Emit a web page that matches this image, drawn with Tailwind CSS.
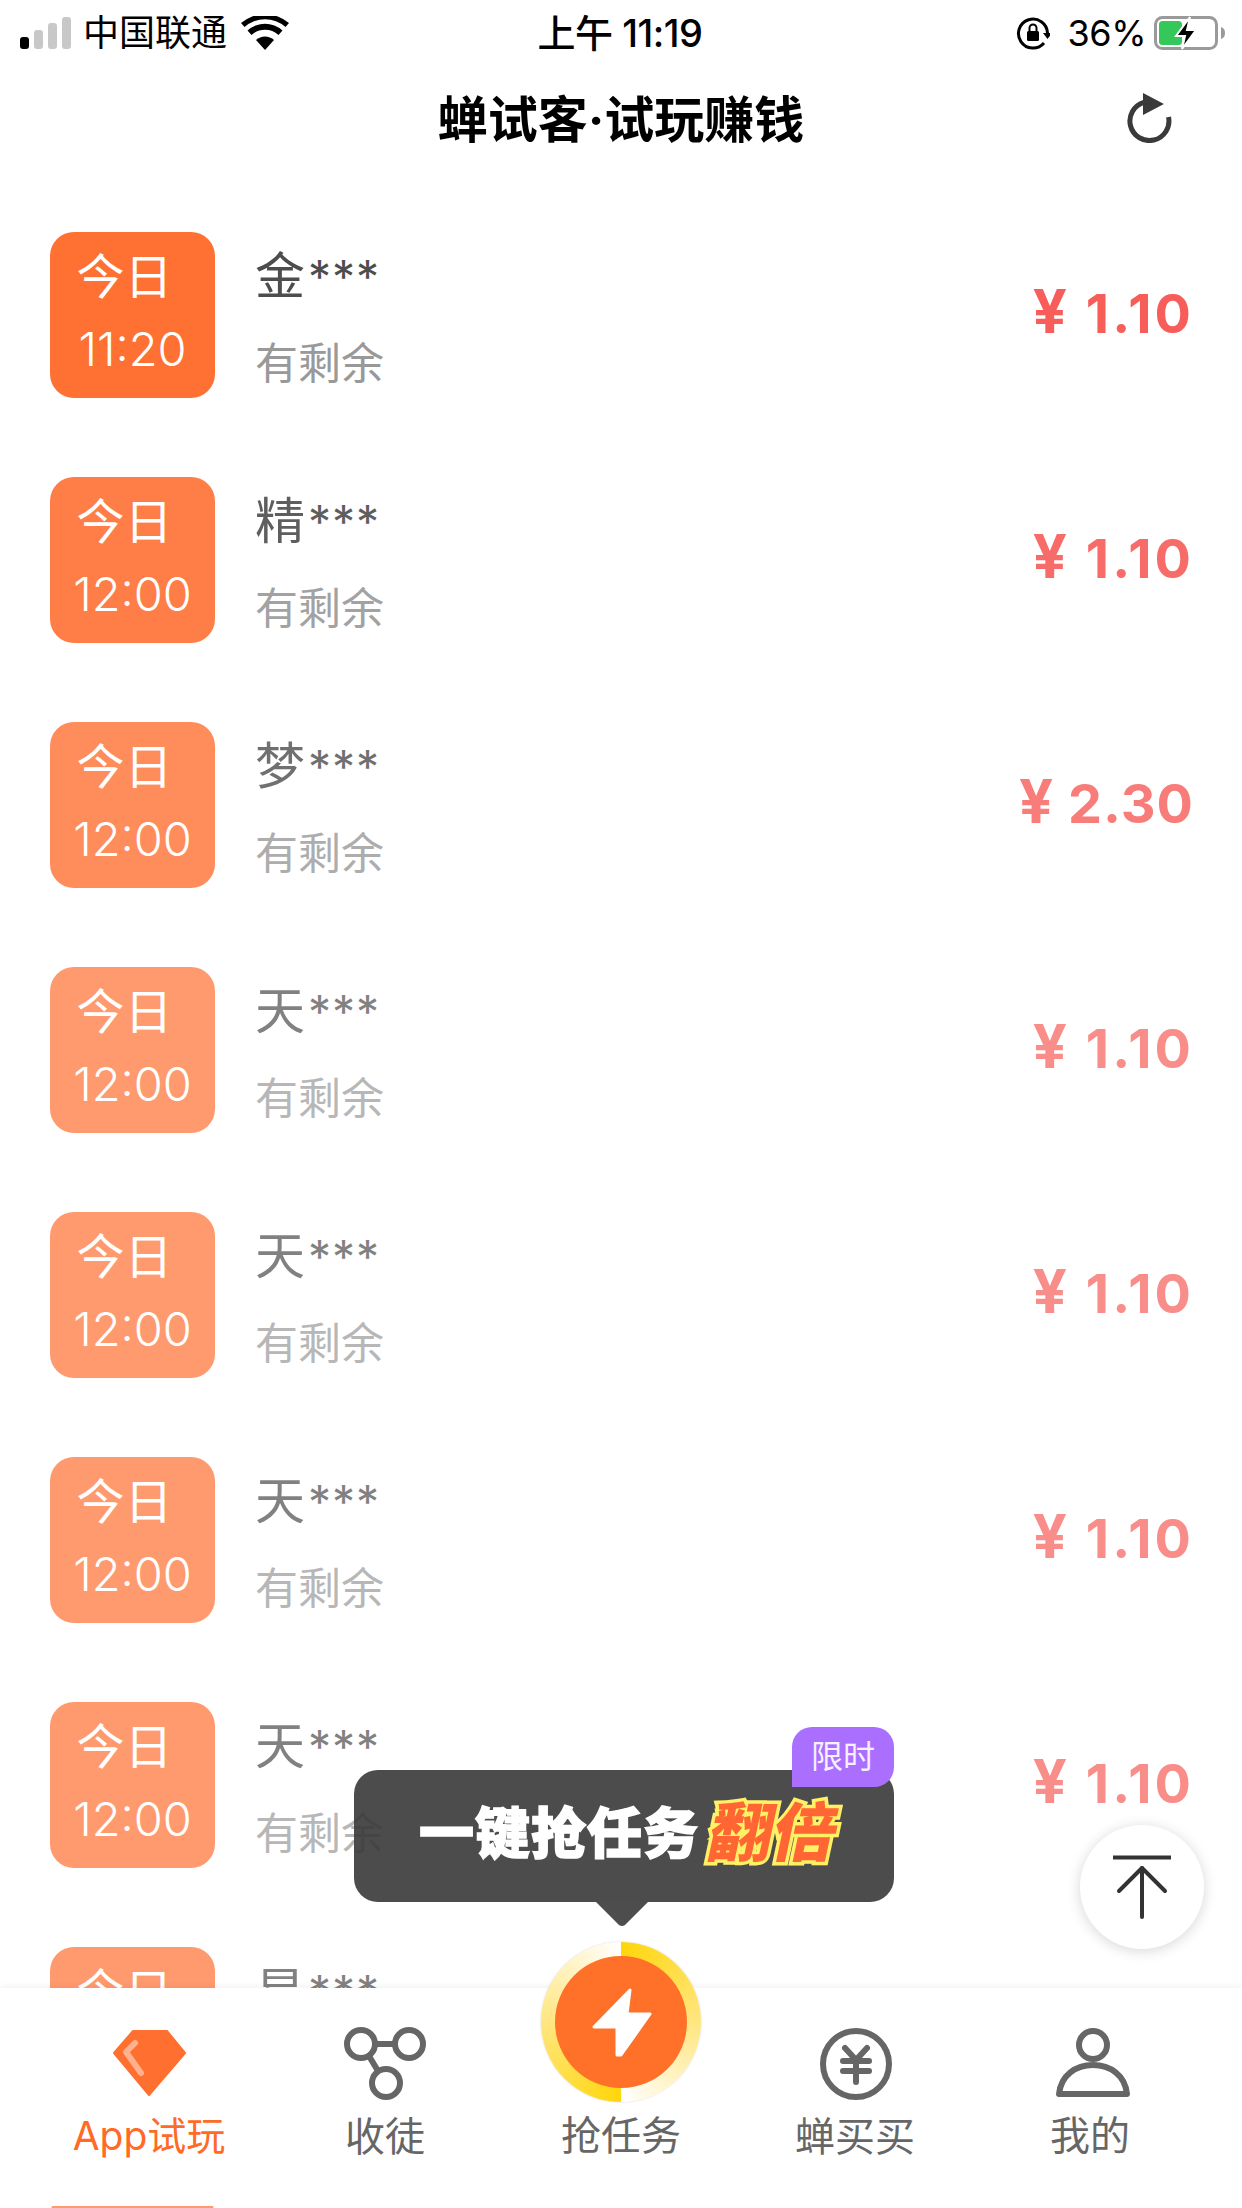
<!DOCTYPE html>
<html lang="zh-CN">
<head>
    <meta charset="UTF-8">
    <meta name="viewport" content="width=device-width, initial-scale=1.0">
    <title>蝉试客·试玩赚钱</title>
    <script src="https://cdn.jsdelivr.net/npm/@tailwindcss/browser@4"></script>
</head>
<body class="bg-white font-['Inter','Noto_Sans_CJK_SC',sans-serif]">
<div class="relative w-[1242px] h-[2208px] overflow-hidden bg-white">

    <!-- Status bar -->
    <div class="grid grid-cols-3 items-center h-[66px] pl-[20px] pr-[16px] text-black">
        <div class="flex items-center">
            <div class="flex items-end gap-[5px] h-[32px]">
                <div class="w-[9px] h-[12px] rounded-[3px] bg-black"></div>
                <div class="w-[9px] h-[19px] rounded-[3px] bg-[#c8c8c8]"></div>
                <div class="w-[9px] h-[26px] rounded-[3px] bg-[#c8c8c8]"></div>
                <div class="w-[9px] h-[32px] rounded-[3px] bg-[#c8c8c8]"></div>
            </div>
            <span class="ml-[12px] text-[36px] leading-none whitespace-nowrap">中国联通</span>
            <svg class="ml-[14px]" width="48" height="34" viewBox="0 0 48 34">
                <path d="M24 34 L15 24 A13 13 0 0 1 33 24 Z" fill="#000"/>
                <path d="M10.500 19 A20 20 0 0 1 37.500 19 L41.500 14.500 A26 26 0 0 0 6.500 14.500 Z" fill="#000"/>
                <path d="M3.500 11 A31 31 0 0 1 44.500 11 L48 7 A37 37 0 0 0 0 7 Z" fill="#000"/>
            </svg>
        </div>
        <div class="pr-[6px] text-center text-[38px] leading-none font-medium tracking-[-0.5px] whitespace-nowrap">上午 11:19</div>
        <div class="flex items-center justify-end">
            <svg width="34" height="34" viewBox="0 0 34 34" fill="none">
                <path d="M28 27 A14.500 14.500 0 1 1 31.500 17" stroke="#000" stroke-width="3"/>
                <path d="M27 17 L36 17 L31.500 23 Z" fill="#000"/>
                <rect x="11" y="15" width="12" height="10" rx="1.500" fill="#000"/>
                <path d="M13.500 15 V12 A3.500 3.500 0 0 1 20.500 12 V15" stroke="#000" stroke-width="2"/>
            </svg>
            <span class="ml-[18px] text-[36px] leading-none tracking-[-0.5px]">36%</span>
            <svg class="ml-[8px]" width="72" height="34" viewBox="0 0 72 34" fill="none">
                <rect x="1.500" y="1.500" width="61" height="31" rx="7" stroke="#9a9a9a" stroke-width="3"/>
                <path d="M67 11 C70 12 71 14 71 17 C71 20 70 22 67 23 Z" fill="#9a9a9a"/>
                <rect x="5" y="5" width="23" height="24" rx="3.500" fill="#34c759"/>
                <path d="M36 1 L22 20 L31 20 L28 33 L42 14 L33 14 Z" fill="#000" stroke="#fff" stroke-width="2"/>
            </svg>
        </div>
    </div>

    <!-- Nav bar -->
    <div class="relative flex items-center justify-center h-[108px]">
        <h1 class="text-[50px] leading-none font-bold text-black whitespace-nowrap">蝉试客·试玩赚钱</h1>
        <svg class="absolute left-[1126px] top-[25px]" width="46" height="52" viewBox="0 0 46 52" fill="none">
            <path d="M18 11.300 A19.500 19.500 0 1 0 42.500 26" stroke="#3a3a3a" stroke-width="5"/>
            <path d="M17 2 L38 13 L17 24 Z" fill="#3a3a3a"/>
        </svg>
    </div>

    <!-- Task list -->
    <div id="list" class="pt-[58px] pl-[50px] pr-[50px]"></div>

    <!-- Back to top -->
    <div class="absolute left-[1080px] top-[1825px] flex items-center justify-center w-[124px] h-[124px] rounded-full bg-white shadow-[0_2px_14px_rgba(0,0,0,0.16)]">
        <svg width="64" height="64" viewBox="0 0 64 64" fill="none" stroke="#333" stroke-width="4" stroke-linecap="round" stroke-linejoin="round">
            <path d="M3 2.500 H61" stroke-linecap="butt"/>
            <path d="M32 13 V62"/>
            <path d="M9 36 L32 13 L55 36"/>
        </svg>
    </div>

    <!-- Tooltip over the task button -->
    <div class="absolute left-[354px] top-[1770px] w-[540px] h-[132px] rounded-[24px] bg-[#393939]/90">
        <div class="absolute right-0 -top-[43px] flex items-center justify-center w-[102px] h-[60px] rounded-t-[20px] rounded-br-[20px] bg-[#aa6fff] text-[32px] leading-none text-white/90">限时</div>
        <div class="flex items-center h-full pl-[65px] pb-[6px]">
            <span class="text-[55px] leading-none font-black text-white tracking-[1px] whitespace-nowrap [-webkit-text-stroke:1.5px_#fff]">一键抢任务</span>
            <span class="ml-[11px] -skew-x-12 text-[64px] leading-none font-black text-[#ff6633] whitespace-nowrap [-webkit-text-stroke:7px_#fff066] [paint-order:stroke_fill]">翻倍</span>
        </div>
        <svg class="absolute left-[242px] top-full" width="52" height="25" viewBox="0 0 52 25">
            <path d="M0 0 H52 L29 23 Q26 25 23 23 Z" fill="#4d4d4d"/>
        </svg>
    </div>

    <!-- Tab bar -->
    <div class="absolute left-0 right-0 top-[1988px] h-[218px] grid grid-cols-5 px-[31px] bg-white shadow-[0_-2px_6px_rgba(0,0,0,0.05)]">
        <div class="flex flex-col items-center pt-[40px]">
            <svg width="74" height="68" viewBox="0 0 74 68">
                <path d="M21 3 H55 L73 25 L37 67 L2 25 Z" fill="#ff7030" stroke="#ff7030" stroke-width="2" stroke-linejoin="round"/>
                <path d="M23 15 L14 24 L29 45" fill="none" stroke="#ffb08e" stroke-width="6" stroke-linecap="round" stroke-linejoin="round"/>
            </svg>
            <span class="mt-[20px] text-[39px] leading-none text-[#ff6a26] whitespace-nowrap">App试玩</span>
        </div>
        <div class="flex flex-col items-center pt-[38px]">
            <svg width="84" height="74" viewBox="0 0 84 74" fill="none" stroke="#666" stroke-width="6">
                <circle cx="18" cy="18" r="14"/>
                <circle cx="66" cy="18" r="14"/>
                <circle cx="43" cy="57" r="14"/>
                <path d="M32 18 H52"/>
                <path d="M26 30 L35 45"/>
            </svg>
            <span class="mt-[17px] text-[40px] leading-none text-[#666] whitespace-nowrap">收徒</span>
        </div>
        <div class="relative flex flex-col items-center">
            <div class="absolute -top-[46px] flex items-center justify-center w-[160px] h-[160px] rounded-full bg-[conic-gradient(#ffd60a,#ffe680_25%,#ffffff_50%,#ffd60a_50%,#ffe680_75%,#ffffff)] shadow-[0_0_2px_rgba(0,0,0,0.2)]">
                <div class="flex items-center justify-center w-[132px] h-[132px] rounded-full bg-[#ff7029]">
                    <svg width="66" height="72" viewBox="0 0 66 72">
                        <path d="M42 4 L6 41 H29 V69 H33 L62 28 H39 Z" fill="#fff" stroke="#fff" stroke-width="3" stroke-linejoin="round"/>
                    </svg>
                </div>
            </div>
            <span class="mt-[128px] text-[40px] leading-none text-[#666] whitespace-nowrap">抢任务</span>
        </div>
        <div class="flex flex-col items-center pt-[40px]">
            <svg class="-ml-[2px]" width="74" height="72" viewBox="0 0 74 72" fill="none" stroke="#666" stroke-width="6" stroke-linecap="round" stroke-linejoin="round">
                <circle cx="37" cy="36" r="33"/>
                <path d="M26 20 L37 32 L48 20"/>
                <path d="M24 33 H50"/>
                <path d="M24 43 H50"/>
                <path d="M37 33 V54"/>
            </svg>
            <span class="mt-[17px] -ml-[4px] text-[40px] leading-none text-[#666] whitespace-nowrap">蝉买买</span>
        </div>
        <div class="flex flex-col items-center pt-[40px]">
            <svg width="74" height="70" viewBox="0 0 74 70" fill="none" stroke="#666" stroke-width="6" stroke-linejoin="round">
                <circle cx="37" cy="17" r="14"/>
                <path d="M3 66 C5 47 20 37 37 37 C54 37 69 47 71 66 Z"/>
            </svg>
            <span class="mt-[18px] -ml-[6px] text-[40px] leading-none text-[#666] whitespace-nowrap">我的</span>
        </div>
    </div>
</div>

<script>
    const tasks = [
        { time: "11:20", name: "金", price: "1.10", fade: "opacity-100", spacing: "tracking-[3px]" },
        { time: "12:00", name: "精", price: "1.10", fade: "opacity-90", spacing: "tracking-[3px]" },
        { time: "12:00", name: "梦", price: "2.30", fade: "opacity-80", spacing: "tracking-[1px]" },
        { time: "12:00", name: "天", price: "1.10", fade: "opacity-70", spacing: "tracking-[3px]" },
        { time: "12:00", name: "天", price: "1.10", fade: "opacity-70", spacing: "tracking-[3px]" },
        { time: "12:00", name: "天", price: "1.10", fade: "opacity-70", spacing: "tracking-[3px]" },
        { time: "12:00", name: "天", price: "1.10", fade: "opacity-70", spacing: "tracking-[3px]" },
        { time: "12:00", name: "星", price: "1.10", fade: "opacity-70", spacing: "tracking-[3px]" },
    ];

    document.getElementById("list").innerHTML = tasks.map(t => `
        <div class="flex items-center h-[166px] mb-[79px] ${t.fade}">
            <div class="flex flex-col items-center w-[165px] h-[166px] rounded-[24px] bg-[#ff7033] text-white pt-[21px]">
                <span class="mr-[16px] text-[48px] leading-none">今日</span>
                <span class="mt-[24px] text-[47px] leading-none font-[350]">${t.time}</span>
            </div>
            <div class="flex flex-col ml-[40px] pt-[6px]">
                <span class="text-[50px] leading-none text-[#4d4d4d]">${t.name}<span class="ml-[3px] text-[46px] tracking-[1px]">***</span></span>
                <span class="mt-[41px] text-[43px] leading-none text-[#999]">有剩余</span>
            </div>
            <span class="ml-auto -mr-[2px] mb-[8px] text-[54px] leading-none font-bold ${t.spacing} text-[#f75d59] whitespace-nowrap"><span class="text-[60px]">¥</span> ${t.price}</span>
        </div>
    `).join("") + `<div class="w-[165px] h-[166px] rounded-[24px] bg-[#ff7033] opacity-70"></div>`;
</script>
</body>
</html>
